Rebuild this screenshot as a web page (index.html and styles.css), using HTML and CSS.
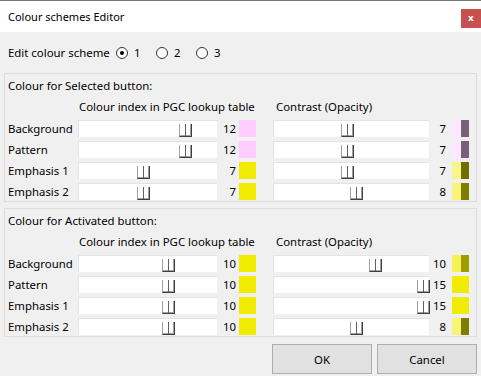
FILE: index.html
```html
<!DOCTYPE html>
<html lang="en">
  <head>
    <meta charset="UTF-8" />
    <title>Colour schemes Editor</title>
    <link rel="stylesheet" href="styles.css">
  </head>
  <body>
    <div class="window">
      <div class="titlebar">
        <span class="title">Colour schemes Editor</span>
        <button class="close-btn">x</button>
      </div>

      <div class="content">
        <div class="scheme-row">
          <span class="scheme-label">Edit colour scheme</span>
          <label class="radio"><span class="radio-dot checked"></span>1</label>
          <label class="radio"><span class="radio-dot"></span>2</label>
          <label class="radio"><span class="radio-dot"></span>3</label>
        </div>

        <div class="group">
          <div class="group-title">Colour for Selected button:</div>
          <div class="heads">
            <span class="head-index">Colour index in PGC lookup table</span>
            <span class="head-contrast">Contrast (Opacity)</span>
          </div>

          <div class="row">
            <span class="row-label">Background</span>
            <div class="track index"><span class="thumb" style="--v: 12"></span></div>
            <span class="num">12</span>
            <span class="swatch pink"></span>
            <div class="track contrast"><span class="thumb" style="--v: 7"></span></div>
            <span class="num small">7</span>
            <span class="swatch split" style="--light: #ffe7ff; --dark: #775f77"></span>
          </div>
          <div class="row">
            <span class="row-label">Pattern</span>
            <div class="track index"><span class="thumb" style="--v: 12"></span></div>
            <span class="num">12</span>
            <span class="swatch pink"></span>
            <div class="track contrast"><span class="thumb" style="--v: 7"></span></div>
            <span class="num small">7</span>
            <span class="swatch split" style="--light: #ffe7ff; --dark: #775f77"></span>
          </div>
          <div class="row">
            <span class="row-label">Emphasis 1</span>
            <div class="track index"><span class="thumb" style="--v: 7"></span></div>
            <span class="num">7</span>
            <span class="swatch yellow"></span>
            <div class="track contrast"><span class="thumb" style="--v: 7"></span></div>
            <span class="num small">7</span>
            <span class="swatch split" style="--light: #f8f688; --dark: #706e00"></span>
          </div>
          <div class="row">
            <span class="row-label">Emphasis 2</span>
            <div class="track index"><span class="thumb" style="--v: 7"></span></div>
            <span class="num">7</span>
            <span class="swatch yellow"></span>
            <div class="track contrast"><span class="thumb" style="--v: 8"></span></div>
            <span class="num small">8</span>
            <span class="swatch split" style="--light: #f7f477; --dark: #807d00"></span>
          </div>
        </div>

        <div class="group">
          <div class="group-title">Colour for Activated button:</div>
          <div class="heads">
            <span class="head-index">Colour index in PGC lookup table</span>
            <span class="head-contrast">Contrast (Opacity)</span>
          </div>

          <div class="row">
            <span class="row-label">Background</span>
            <div class="track index"><span class="thumb" style="--v: 10"></span></div>
            <span class="num">10</span>
            <span class="swatch yellow"></span>
            <div class="track contrast"><span class="thumb" style="--v: 10"></span></div>
            <span class="num small">10</span>
            <span class="swatch split" style="--light: #f5f255; --dark: #a09d00"></span>
          </div>
          <div class="row">
            <span class="row-label">Pattern</span>
            <div class="track index"><span class="thumb" style="--v: 10"></span></div>
            <span class="num">10</span>
            <span class="swatch yellow"></span>
            <div class="track contrast"><span class="thumb" style="--v: 15"></span></div>
            <span class="num small">15</span>
            <span class="swatch split" style="--light: #f0eb00; --dark: #f0eb00"></span>
          </div>
          <div class="row">
            <span class="row-label">Emphasis 1</span>
            <div class="track index"><span class="thumb" style="--v: 10"></span></div>
            <span class="num">10</span>
            <span class="swatch yellow"></span>
            <div class="track contrast"><span class="thumb" style="--v: 15"></span></div>
            <span class="num small">15</span>
            <span class="swatch split" style="--light: #f0eb00; --dark: #f0eb00"></span>
          </div>
          <div class="row">
            <span class="row-label">Emphasis 2</span>
            <div class="track index"><span class="thumb" style="--v: 10"></span></div>
            <span class="num">10</span>
            <span class="swatch yellow"></span>
            <div class="track contrast"><span class="thumb" style="--v: 8"></span></div>
            <span class="num small">8</span>
            <span class="swatch split" style="--light: #f7f477; --dark: #807d00"></span>
          </div>
        </div>

        <div class="buttons">
          <button class="dlg-btn">OK</button>
          <button class="dlg-btn">Cancel</button>
        </div>
      </div>
    </div>
  </body>
</html>
```

FILE: styles.css
```css
body {
  margin: 0;
  padding: 0;
  font-family: "Noto Sans", "Liberation Sans", sans-serif;
  font-size: 11.4px;
  color: #000;
  background-color: #f0f0f0;
}

.window {
  width: 481px;
  height: 376px;
  box-sizing: border-box;
  border-top: 1px solid #7a7a7a;
  background-color: #f0f0f0;
  overflow: hidden;
}

.titlebar {
  height: 31px;
  background-color: #fff;
  display: flex;
  align-items: center;
  padding-left: 8px;
}

.title {
  flex: 1;
  line-height: 16px;
  font-size: 11px;
}

.close-btn {
  align-self: flex-start;
  margin-top: 8px;
  width: 20px;
  height: 19px;
  padding: 0;
  border: none;
  background-color: #c75050;
  color: #fff;
  font-family: "DejaVu Sans", sans-serif;
  font-size: 9px;
  font-weight: bold;
  line-height: 19px;
}

.content {
  padding: 0 4px;
}

.scheme-row {
  display: flex;
  align-items: center;
  height: 16px;
  line-height: 16px;
  margin-top: 13px;
  padding-left: 4px;
}

.scheme-label {
  width: 108px;
  white-space: nowrap;
}

.radio {
  display: flex;
  align-items: center;
  width: 40px;
}

.radio-dot {
  width: 12px;
  height: 12px;
  box-sizing: border-box;
  border: 1px solid #333;
  border-radius: 50%;
  background-color: #fff;
  margin-right: 6px;
  display: flex;
  align-items: center;
  justify-content: center;
}

.radio-dot.checked::after {
  content: "";
  width: 4px;
  height: 4px;
  border-radius: 50%;
  background-color: #000;
}

.group {
  margin-top: 12px;
  border: 1px solid #dcdcdc;
  padding: 4px 3px 1px;
}

.group + .group {
  margin-top: 6px;
}

.group-title {
  line-height: 16px;
}

.heads {
  display: flex;
  line-height: 16px;
  margin-top: 5px;
}

.head-index {
  margin-left: 71px;
  width: 197px;
  white-space: nowrap;
}

.head-contrast {
  white-space: nowrap;
}

.row {
  display: flex;
  align-items: center;
  height: 17px;
  margin-top: 5px;
}

.row + .row {
  margin-top: 4px;
}

.row-label {
  width: 70px;
  line-height: 16px;
  white-space: nowrap;
}

.track {
  position: relative;
  height: 17px;
  box-sizing: border-box;
  background-color: #fff;
  border-left: 1px solid #e3e3e3;
  border-top: 1px solid #e3e3e3;
}

.track.index {
  width: 139px;
  --step: 8.3px;
}

.track.contrast {
  width: 156px;
  margin-left: 17px;
  --step: 9.5px;
}

.thumb {
  position: absolute;
  bottom: 0;
  left: calc(var(--v) * var(--step));
  width: 13px;
  height: 13px;
  box-sizing: border-box;
  border-left: 1px solid #a0a0a0;
  border-right: 1px solid #404040;
  border-bottom: 1px solid #404040;
  box-shadow: inset -1px -1px 0 #a0a0a0;
}

.thumb::after {
  content: "";
  position: absolute;
  left: 5px;
  top: 0;
  bottom: 0;
  width: 1px;
  background-color: #606060;
}

.num {
  width: 19px;
  text-align: right;
  line-height: 16px;
}

.num.small {
  width: 17px;
}

.swatch {
  width: 17px;
  height: 17px;
  margin-left: 3px;
}

.swatch.pink {
  background-color: #ffccff;
}

.swatch.yellow {
  background-color: #f0eb00;
}

.swatch.split {
  margin-left: 6px;
  background: linear-gradient(to right, var(--light) 50%, var(--dark) 50%);
}

.buttons {
  display: flex;
  justify-content: flex-end;
  gap: 5px;
  margin-top: 7px;
}

.dlg-btn {
  width: 100px;
  height: 30px;
  border: 1px solid #adadad;
  background-color: #e1e1e1;
  font-family: "Noto Sans", "Liberation Sans", sans-serif;
  font-size: 11.4px;
  color: #000;
  padding: 0;
}
```
